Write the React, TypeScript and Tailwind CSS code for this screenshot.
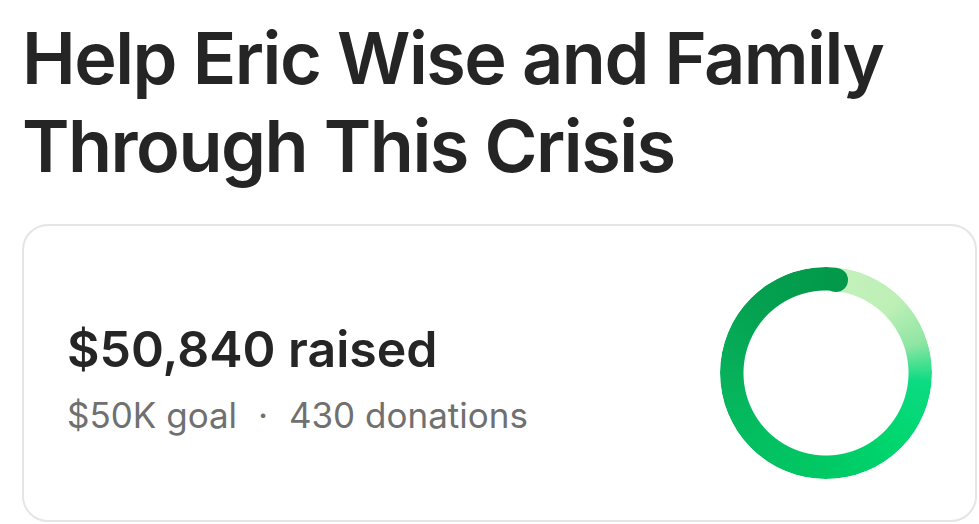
export default function App() {
  return (
    <div className="min-h-[524px] bg-white pl-[22px] pr-[2px] pt-[14px] font-['Inter',sans-serif] text-[#252525]">
      <h1 className="text-[72px] font-semibold leading-[88px] tracking-[-1.5px]">
        Help Eric Wise and Family
        <br />
        Through This Crisis
      </h1>

      {/* Donation summary card */}
      <div className="mt-[34px] flex h-[298px] items-center justify-between rounded-[26px] border-2 border-[#e5e5e5] pl-[43px] pr-[43px]">
        <div className="flex flex-col gap-[14px] pt-[10px]">
          <div className="text-[50px] font-semibold leading-[60px]">$50,840 raised</div>
          <div className="text-[35px] leading-[44px] text-[#707070]">
            $50K goal <span className="mx-[11px]">·</span> 430 donations
          </div>
        </div>
        <ProgressRing />
      </div>
    </div>
  );
}

function ProgressRing() {
  return (
    <div className="relative h-[212px] w-[212px] shrink-0">
      <div className="h-full w-full rounded-full bg-[conic-gradient(#029a4a_0deg_6deg,#c4f1bc_6deg,#bdefb6_45deg,#8fe6a3_72deg,#0bdb82_95deg,#00d66e_135deg,#00c964_180deg,#03bf60_225deg,#07b05a_270deg,#04a150_315deg,#029a4a_360deg)] [mask:radial-gradient(farthest-side,transparent_calc(100%-24px),#000_calc(100%-23px))]" />
      <div className="absolute left-[104px] top-[0.5px] h-[24px] w-[24px] rounded-full bg-[#029a4a]" />
    </div>
  );
}
